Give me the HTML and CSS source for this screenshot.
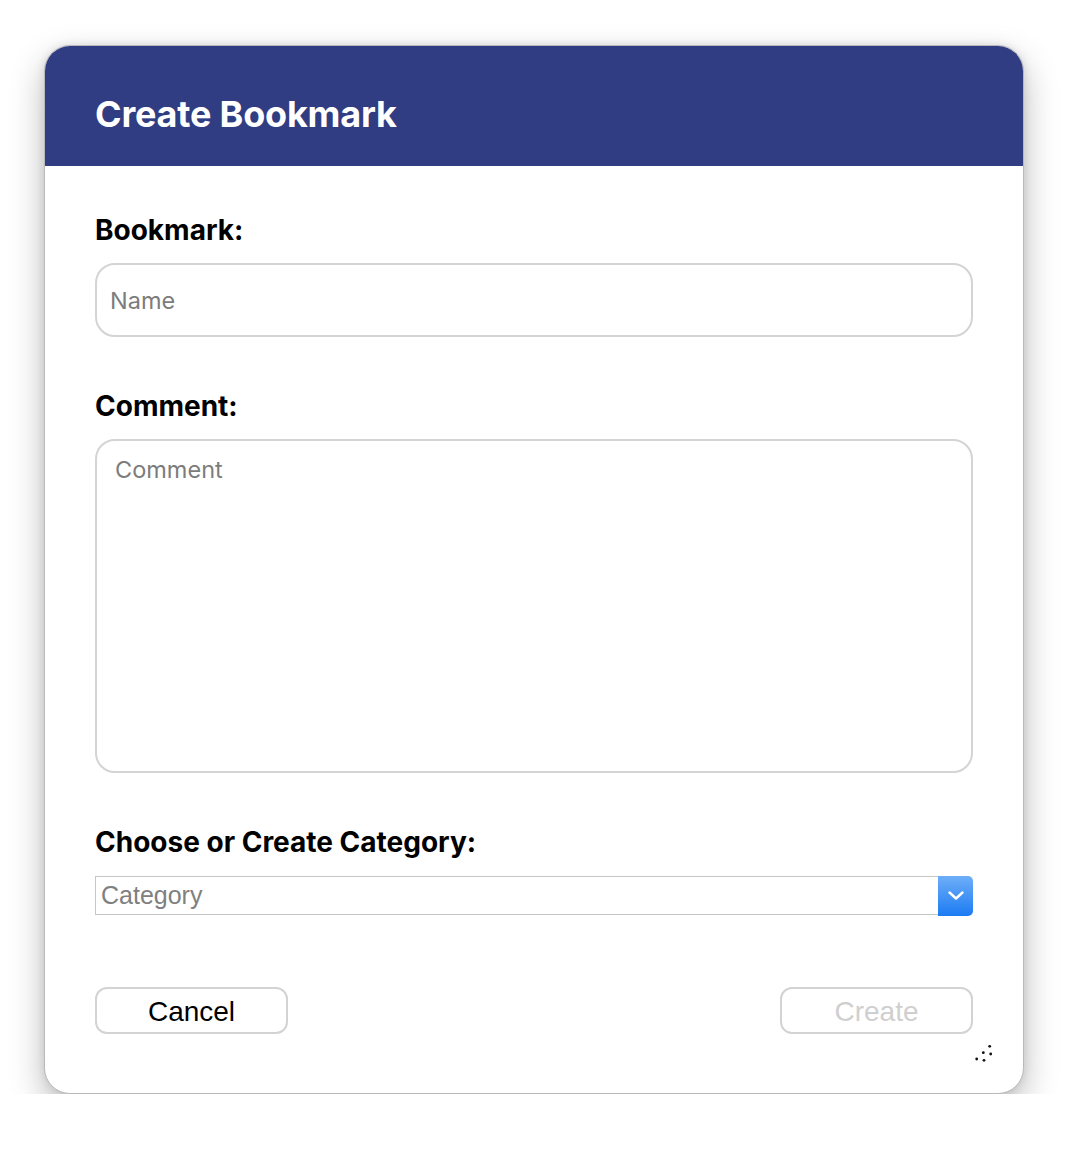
FILE: index.html
```html
<!DOCTYPE html>
<html lang="en">
<head>
<meta charset="utf-8">
<title>Create Bookmark</title>
<link rel="stylesheet" href="styles.css">
</head>
<body>
<div class="window">
  <header class="header">
    <h1 class="title">Create Bookmark</h1>
  </header>
  <main class="content">
    <label class="label" for="name">Bookmark:</label>
    <input class="field" id="name" type="text" placeholder="Name">

    <label class="label label-gap" for="comment">Comment:</label>
    <textarea class="area" id="comment" placeholder="Comment"></textarea>

    <label class="label label-gap" for="category">Choose or Create Category:</label>
    <div class="combo">
      <input class="combo-input" id="category" type="text" placeholder="Category">
      <span class="combo-btn">
        <svg width="18" height="12" viewBox="0 0 18 12"><path d="M2.5 2.5 L9 8.5 L15.5 2.5" fill="none" stroke="#fff" stroke-width="2.4" stroke-linecap="round" stroke-linejoin="round"/></svg>
      </span>
    </div>

    <div class="actions">
      <button class="btn" type="button">Cancel</button>
      <button class="btn btn-disabled" type="button">Create</button>
    </div>
  </main>
  <svg class="grip" width="24" height="22" viewBox="0 0 24 22">
    <circle cx="19.7" cy="4.3" r="1.4" fill="#111"/>
    <circle cx="13.3" cy="10.7" r="1.4" fill="#111"/>
    <circle cx="20.7" cy="12" r="1.4" fill="#111"/>
    <circle cx="6.7" cy="17" r="1.4" fill="#111"/>
    <circle cx="14" cy="18.3" r="1.4" fill="#111"/>
  </svg>
</div>
</body>
</html>
```

FILE: styles.css
```css
* { box-sizing: border-box; }

html, body {
  margin: 0;
  padding: 0;
  background: #ffffff;
}

body {
  padding: 45px 0 0 44px;
  font-family: Inter, "Noto Sans", sans-serif;
}

.window {
  position: relative;
  width: 980px;
  height: 1049px;
  border: 1px solid #b9b9b9;
  border-radius: 26px;
  background: #ffffff;
  overflow: hidden;
  box-shadow: 0 14px 34px rgba(0, 0, 0, 0.27), 0 0 8px rgba(0, 0, 0, 0.10);
  display: flex;
  flex-direction: column;
}

.header {
  height: 120px;
  flex: 0 0 120px;
  background: #303d82;
  padding: 48px 0 0 50px;
}

.title {
  margin: 0;
  font-family: Inter, "Noto Sans", sans-serif;
  font-weight: 700;
  font-size: 36px;
  line-height: 40px;
  color: #ffffff;
  letter-spacing: -0.2px;
}

.content {
  display: flex;
  flex-direction: column;
  padding: 49px 50px 0 50px;
}

.label {
  display: block;
  font-family: Inter, "Noto Sans", sans-serif;
  font-weight: 700;
  font-size: 28px;
  line-height: 30px;
  color: #000;
  margin-bottom: 18px;
  letter-spacing: 0;
}

.label-gap { margin-top: 54px; }

.field {
  width: 878px;
  height: 74px;
  border: 2px solid #d4d4d4;
  border-radius: 20px;
  padding: 0 0 0 13px;
  font-family: Inter, "Noto Sans", sans-serif;
  font-size: 23.5px;
  color: #333;
  outline: none;
  background: #fff;
}

.field::placeholder, .area::placeholder { color: #7c7c7c; }

.area {
  width: 878px;
  height: 334px;
  border: 2px solid #d4d4d4;
  border-radius: 20px;
  padding: 15px 18px;
  font-family: Inter, "Noto Sans", sans-serif;
  font-size: 23.5px;
  line-height: 28px;
  color: #333;
  outline: none;
  resize: none;
  background: #fff;
  display: block;
}

.combo {
  display: flex;
  width: 878px;
  height: 40px;
  margin-top: 1px;
}

.combo-input {
  flex: 1;
  height: 39px;
  border: 1px solid #c6c6c6;
  border-right: none;
  border-radius: 0;
  padding: 0 0 0 5px;
  font-family: "Liberation Sans", Arial, sans-serif;
  font-size: 25px;
  color: #333;
  outline: none;
  background: #fff;
}

.combo-input::placeholder { color: #808080; }

.combo-btn {
  width: 35px;
  height: 40px;
  border-radius: 0 5px 5px 0;
  background: linear-gradient(#6eaef8, #1c7bf3);
  display: flex;
  align-items: center;
  justify-content: center;
}

.actions {
  display: flex;
  justify-content: space-between;
  margin-top: 71px;
}

.btn {
  width: 193px;
  height: 47px;
  border: 2px solid #d3d3d3;
  border-radius: 12px;
  background: #fff;
  font-family: "Liberation Sans", Arial, sans-serif;
  font-size: 28px;
  color: #000;
  padding: 2px 0 0;
}

.btn-disabled { color: #cfcfcf; }

.grip {
  position: absolute;
  left: 925px;
  top: 996px;
}
```
